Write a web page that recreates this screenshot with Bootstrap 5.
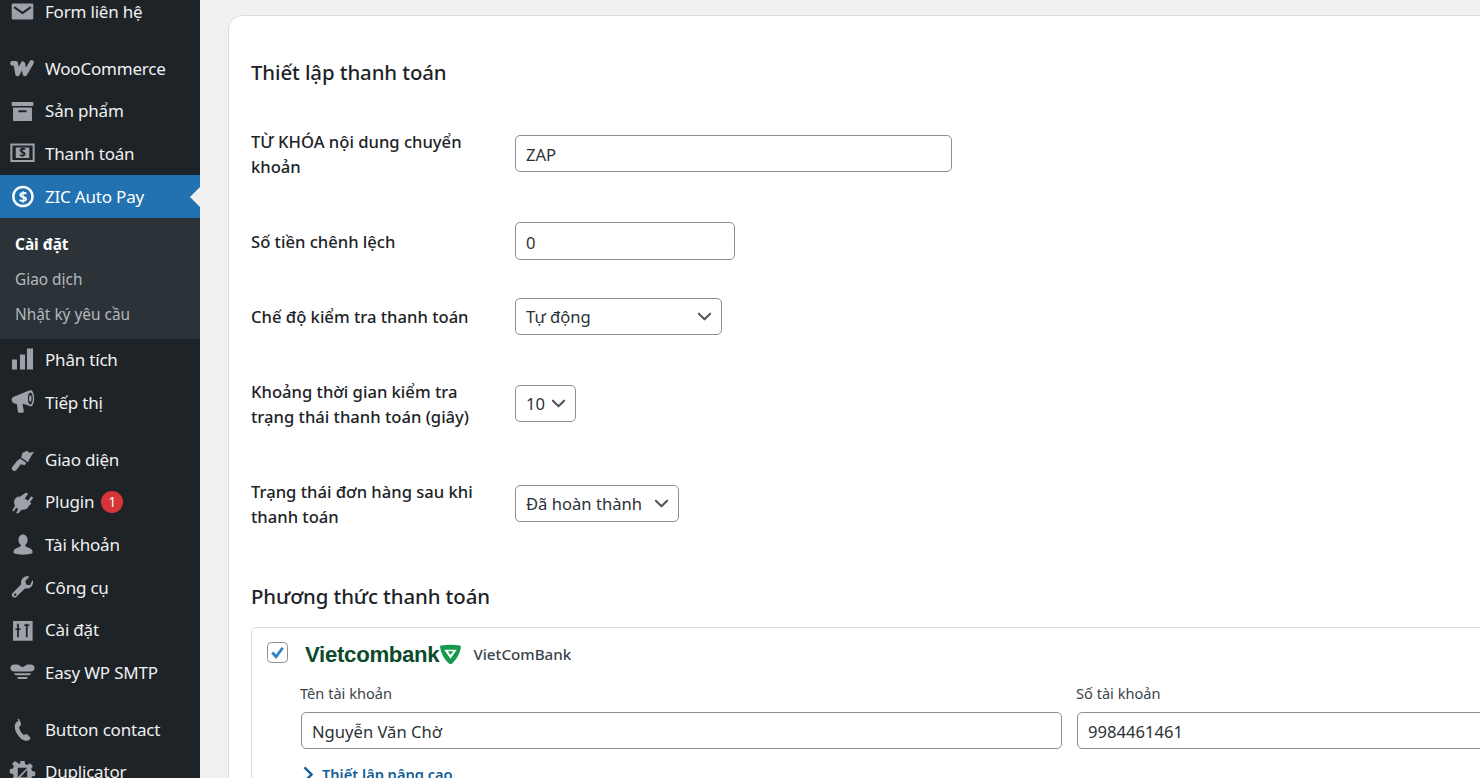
<!DOCTYPE html>
<html lang="vi">
<head>
  <meta charset="UTF-8" />
  <meta name="viewport" content="width=device-width, initial-scale=1.0"/>
  <title>ZIC Auto Pay</title>
  <link href="https://cdn.jsdelivr.net/npm/bootstrap@5.3.0/dist/css/bootstrap.min.css" rel="stylesheet"/>
  <style>
    html, body { height: 100%; overflow: hidden; }
    body { background: #f0f0f1; color: #1d2327; font-family: "Noto Sans", "Liberation Sans", sans-serif; font-size: 17px; }
    .wp-side { width: 200px; height: 778px; background: #1d2327; overflow: hidden; flex-shrink: 0; }
    .side-list { margin-top: -9.500px; }
    .side-item { height: 42.67px; color: #f0f0f1; font-size: 17px; letter-spacing: -.2px; gap: 9px; padding-left: 9px; position: relative; text-decoration: none; white-space: nowrap; }
    .side-item svg { width: 27px; height: 27px; fill: #9ca2a7; flex-shrink: 0; }
    .side-gap { margin-top: 14px; }
    .side-active { background: #2271b1; color: #fff; }
    .side-active svg { fill: #fff; }
    .side-active::after { content: ""; position: absolute; right: 0; top: 12px; border: 10px solid transparent; border-right-color: #f0f0f1; border-left-width: 0; }
    .side-sub { background: #2c3338; padding: 9px 0 7px; }
    .side-sub a { display: flex; align-items: center; height: 35px; padding-left: 15px; color: #b4b9be; font-size: 15.4px; letter-spacing: 0; text-decoration: none; }
    .side-sub a.now { color: #fff; font-weight: 700; }
    .side-badge { width: 22px; height: 22px; border-radius: 50%; background: #d63638; color: #fff; font-size: 13.500px; letter-spacing: 0; margin-left: -2px; }
    .wp-main { padding: 15px 0 0 28px; min-width: 0; flex-grow: 1; }
    .set-card { width: 1400px; height: 900px; background: #fff; border: 1px solid #dcdcde; border-radius: 14px; padding: 42px 22px 0; }
    .set-title { font-size: 20.4px; font-weight: 500; letter-spacing: -.1px; line-height: 28px; margin: 0; color: #1d2327; }
    .set-rows { row-gap: 50px; margin-top: 43px; }
    .set-line { flex-shrink: 0; height: 50px; }
    .set-line-one { height: 25px; }
    .set-label { width: 264px; flex-shrink: 0; font-size: 16.6px; font-weight: 500; line-height: 25px; color: #1d2327; padding-right: 30px; margin: 0; }
    .set-field, .set-pick { border: 1px solid #8c8f94; border-radius: 5px; color: #2c3338; font-size: 16.6px; padding: 2px 10px 0; margin-bottom: 1px; box-shadow: none; flex-shrink: 0; }
    .set-field { height: 37px; }
    .set-pick { height: 37px; width: auto; padding-right: 30px;
      background-image: url("data:image/svg+xml,%3csvg xmlns='http://www.w3.org/2000/svg' viewBox='0 0 16 16'%3e%3cpath fill='none' stroke='%2350575e' stroke-linecap='round' stroke-linejoin='round' stroke-width='2.2' d='M2 5l6 6 6-6'/%3e%3c/svg%3e");
      background-position: right 9px center; background-size: 15px 15px; }
    .w-key { width: 437px; }
    .w-diff { width: 220px; height: 38px; }
    .w-mode { width: 207px; }
    .w-sec { width: 61px; padding-right: 0; }
    .w-state { width: 164px; }
    .pay-title { margin-top: 53px; }
    .bank-box { margin-top: 17px; border: 1px solid #dcdcde; border-radius: 5px; height: 300px; padding: 11px 15px; }
    .bank-check { width: 21px; height: 21px; margin: 0; border: 1px solid #8c8f94; border-radius: 4px; background-color: #fff; box-shadow: none; }
    .bank-check:checked { background-color: #fff; border-color: #8c8f94;
      background-image: url("data:image/svg+xml,%3csvg xmlns='http://www.w3.org/2000/svg' viewBox='0 0 20 20'%3e%3cpath fill='none' stroke='%233582c4' stroke-width='3' d='M4.5 10l4 4.5 7-9.5'/%3e%3c/svg%3e"); }
    .bank-head { height: 26px; }
    .bank-logo { margin: 5px 0 0 17px; color: #0b4a2a; font-family: "Liberation Sans", sans-serif; font-weight: 700; font-size: 22.2px; letter-spacing: -.3px; line-height: 26px; }
    .bank-logo svg { width: 21px; height: 21px; margin-left: 1px; }
    .bank-name { margin: 5px 0 0 12px; font-size: 15.2px; font-weight: 500; color: #3c434a; }
    .bank-grid { display: grid; grid-template-columns: 776px 1fr; margin: 16px 0 0 33px; }
    .bank-cap { display: block; font-size: 14.6px; line-height: 24px; color: #3c434a; margin-bottom: 7px; }
    .bank-grid .set-field { width: 761px; margin: 0 0 0 1px; }
    .bank-more { margin: 15px 0 0 35px; color: #135e96; font-size: 14.6px; font-weight: 600; text-decoration: none; }
    .bank-more svg { width: 12px; height: 17px; }
  </style>
</head>
<body class="d-flex">

  <nav class="wp-side">
    <div class="side-list">
      <a class="side-item d-flex align-items-center" href="#"><svg viewBox="0 0 20 20"><path d="M3 4h14a1 1 0 0 1 1 1v10a1 1 0 0 1-1 1H3a1 1 0 0 1-1-1V5a1 1 0 0 1 1-1zm1.200 2.200L3.400 7.400 10 12l6.600-4.600-.8-1.200L10 10.200z"/></svg>Form liên hệ</a>

      <a class="side-item side-gap d-flex align-items-center" href="#"><svg viewBox="0 0 20 20"><path d="M2.500 6.200h2.500L6.300 14l4-7.500L11.800 14 16.800 5.500" fill="none" stroke="#9ca2a7" stroke-width="3.400" stroke-linejoin="round" stroke-linecap="round"/></svg>WooCommerce</a>
      <a class="side-item d-flex align-items-center" href="#"><svg viewBox="0 0 20 20"><path d="M2 3h16v3H2zM3 7h14v10H3zm4 2v1.500h6V9z" fill-rule="evenodd"/></svg>Sản phẩm</a>
      <a class="side-item d-flex align-items-center" href="#"><svg viewBox="0 0 20 20"><path fill-rule="evenodd" d="M1 2.500h18v13.800H1zm1.500 1.500v10.800h15V4zM5 5.500h10v7.800H5z"/><text x="10" y="12.300" font-size="8.500" font-weight="700" fill="#1d2327" text-anchor="middle">$</text></svg>Thanh toán</a>
      <a class="side-item side-active d-flex align-items-center" href="#"><svg viewBox="0 0 20 20"><path fill-rule="evenodd" d="M10.300 2a8 8 0 1 1 0 16 8 8 0 0 1 0-16zm0 1.800a6.200 6.200 0 1 0 0 12.400 6.200 6.200 0 0 0 0-12.400z"/><text x="10.300" y="14" font-size="11" font-weight="700" text-anchor="middle" fill="#fff">$</text></svg>ZIC Auto Pay</a>
      <div class="side-sub">
        <a class="now" href="#">Cài đặt</a>
        <a href="#">Giao dịch</a>
        <a href="#">Nhật ký yêu cầu</a>
      </div>
      <a class="side-item d-flex align-items-center" href="#"><svg viewBox="0 0 20 20"><path d="M2.200 9.300h3.700v7.400H2.200zM8.100 5.600h3.800v11.100H8.100zM13.300 1.100h4.500v15.600h-4.500z"/></svg>Phân tích</a>
      <a class="side-item d-flex align-items-center" href="#"><svg viewBox="0 0 20 20"><path d="M2 7.500C2 6.500 3 6 4 5.500l10-4c1-.7 2-.8 3-.3 1 1.300 1.600 3.300 1.600 5.800s-.6 4.500-1.600 5.500c-1 .5-2 .2-3-.5l-4-1 1 5.500-.5 1H6.800l-1.100-6.500C3 10.800 2 9.500 2 7.500z"/><ellipse cx="15.800" cy="7" rx="1.800" ry="4.500" fill="#1d2327"/><ellipse cx="15.800" cy="7" rx=".9" ry="2.400"/></svg>Tiếp thị</a>

      <a class="side-item side-gap d-flex align-items-center" href="#"><svg viewBox="0 0 20 20"><path d="M10 5l3.500-1.500L15 5l3.500-.8L15.300 9.500 14 12 9 8.500zM8.200 9.300l4.700 3.200-1.300 1.700-2.800-.7-3.300 4.200c-.7.900-1.900 1-2.800.3-.8-.7-.9-1.800-.2-2.700l3.400-4.200z"/></svg>Giao diện</a>
      <a class="side-item d-flex align-items-center" href="#"><svg viewBox="0 0 20 20"><path d="M13.200 2.500l1.500 1.100-2.500 3.400 2.300 1.700 2.500-3.400 1.500 1.100-2.500 3.500 1 .8-.9 1.200-.6-.1c-.7 2.600-3.300 4-5.500 3.300L7.500 18H5.700l1.600-3.100-1.500-1.100L4 16.900l-1-1.300 2-3.400C3.800 10.500 4 8 6 6.200l.4.300.9-1.200 1 .7z" transform="translate(-.5 0)"/></svg><span>Plugin</span><span class="side-badge d-flex align-items-center justify-content-center">1</span></a>
      <a class="side-item d-flex align-items-center" href="#"><svg viewBox="0 0 20 20"><path d="M10.300 2.500c2.100 0 3.500 1.700 3.500 3.900 0 1.700-.8 3.200-1.900 4 .1 1 1 1.400 2.600 2 1.700.6 2.700 1.300 2.900 2.600v1.500c-2 .7-4.300 1-7 1s-5-.3-7-1V15c.2-1.300 1.200-2 2.900-2.600 1.600-.6 2.500-1 2.600-2-1.100-.8-1.900-2.300-1.900-4 0-2.200 1.400-3.900 3.300-3.900z"/></svg>Tài khoản</a>
      <a class="side-item d-flex align-items-center" href="#"><svg viewBox="0 0 20 20"><path fill-rule="evenodd" d="M17.500 4.500c.7 1.700.3 3.600-1 4.900-1.200 1.200-2.900 1.600-4.500 1.100l-6.400 6.400c-.8.800-2.100.8-2.900 0s-.8-2.100 0-2.900L9.100 7.600C8.600 6 9 4.300 10.200 3.100c1.300-1.300 3.200-1.700 4.900-1l-3 3 .6 2.700 2.700.6zM4.600 14.500a.9.900 0 1 0 0 1.800.9.900 0 0 0 0-1.800z"/></svg>Công cụ</a>
      <a class="side-item d-flex align-items-center" href="#"><svg viewBox="0 0 20 20"><path fill-rule="evenodd" d="M3 3h14.500v14.500H3zM6 5v3.500H4.700v1.200H6V15h1.300V9.700h1.300V8.500H7.300V5zm6.500 0v.5h-1.300v1.200h1.300V15h1.300V6.700h1.300V5.500h-1.300V5z"/></svg>Cài đặt</a>
      <a class="side-item d-flex align-items-center" href="#"><svg viewBox="0 0 20 20"><path d="M4 4h2.500L10 6.200 13.500 4H16c1.800 0 3 1 3 2.300C19 8 17.800 9.300 16 9.300H4C2.200 9.300 1 8 1 6.300 1 5 2.200 4 4 4zM3.500 10.500h13l-1.200 1.500H4.700zM6 13.300h8l-.8 1.500H6.800z"/></svg>Easy WP SMTP</a>

      <a class="side-item side-gap d-flex align-items-center" href="#"><svg viewBox="0 0 20 20"><path d="M6.200 2.500c.7-.4 1.400-.2 1.700.5l1 2.800c.2.600 0 1.100-.5 1.500l-1 .8c.4 2.400 1.700 4.500 3.700 6l1.300-.6c.5-.2 1-.1 1.400.3l1.800 2c.4.500.3 1.200-.2 1.600-.9.700-1.900 1.100-3.100.9-3.700-.7-7.600-5.200-8-10-.2-2.300.8-4.100 2.900-4.800z"/></svg>Button contact</a>
      <a class="side-item d-flex align-items-center" href="#"><svg viewBox="0 0 20 20"><path fill-rule="evenodd" d="M8.500 1.500h3l.5 2.300 1.600.7 2-1.300 2.100 2.100-1.300 2 .7 1.600 2.300.5v3l-2.300.5-.7 1.600 1.300 2-2.100 2.100-2-1.300-1.600.7-.5 2.300h-3L8 16.200l-1.600-.7-2 1.300-2.100-2.100 1.300-2-.7-1.600-2.300-.5v-3l2.300-.5.7-1.600-1.300-2 2.100-2.100 2 1.300L8 3.800zM6.500 6.500v7l7-7zm7 1.500l-5 5.500h5z"/></svg>Duplicator</a>
    </div>
  </nav>

  <main class="wp-main">
    <div class="set-card">
      <h2 class="set-title">Thiết lập thanh toán</h2>

      <form class="set-rows d-flex flex-column">
        <div class="set-line d-flex align-items-center">
          <label class="set-label">TỪ KHÓA nội dung chuyển khoản</label>
          <input type="text" class="form-control set-field w-key" value="ZAP"/>
        </div>
        <div class="set-line set-line-one d-flex align-items-center">
          <label class="set-label">Số tiền chênh lệch</label>
          <input type="text" class="form-control set-field w-diff" value="0"/>
        </div>
        <div class="set-line set-line-one d-flex align-items-center">
          <label class="set-label">Chế độ kiểm tra thanh toán</label>
          <select class="form-select set-pick w-mode"><option>Tự động</option></select>
        </div>
        <div class="set-line d-flex align-items-center">
          <label class="set-label">Khoảng thời gian kiểm tra trạng thái thanh toán (giây)</label>
          <select class="form-select set-pick w-sec"><option>10</option></select>
        </div>
        <div class="set-line d-flex align-items-center">
          <label class="set-label">Trạng thái đơn hàng sau khi thanh toán</label>
          <select class="form-select set-pick w-state"><option>Đã hoàn thành</option></select>
        </div>
      </form>

      <h2 class="set-title pay-title">Phương thức thanh toán</h2>

      <div class="bank-box">
        <div class="bank-head d-flex align-items-center">
          <input type="checkbox" class="form-check-input bank-check" checked/>
          <span class="bank-logo d-flex align-items-center">Vietcombank<svg viewBox="0 0 20 20"><path d="M1 1.500C7 .3 13 .3 19 1.500c1 .3 1 1 .8 2C19 9 15.500 15 11.500 18.500c-1 .7-2 .7-3 0C4.500 15 1 9 .2 3.500 0 2.500 0 1.800 1 1.500z" fill="#159a4c"/><path d="M4 5.500h12L10 14z" fill="#fff"/><path d="M7.500 7h5L10 10.500z" fill="#159a4c"/></svg></span>
          <span class="bank-name">VietComBank</span>
        </div>
        <div class="bank-grid">
          <div>
            <label class="bank-cap">Tên tài khoản</label>
            <input type="text" class="form-control set-field" value="Nguyễn Văn Chờ"/>
          </div>
          <div>
            <label class="bank-cap">Số tài khoản</label>
            <input type="text" class="form-control set-field" value="9984461461"/>
          </div>
        </div>
        <a class="bank-more d-flex align-items-center gap-2" href="#"><svg viewBox="0 0 10 14"><path d="M2 1l6 6-6 6" fill="none" stroke="#135e96" stroke-width="2"/></svg>Thiết lập nâng cao</a>
      </div>
    </div>
  </main>

  <script src="https://cdn.jsdelivr.net/npm/bootstrap@5.3.0/dist/js/bootstrap.bundle.min.js"></script>
</body>
</html>
